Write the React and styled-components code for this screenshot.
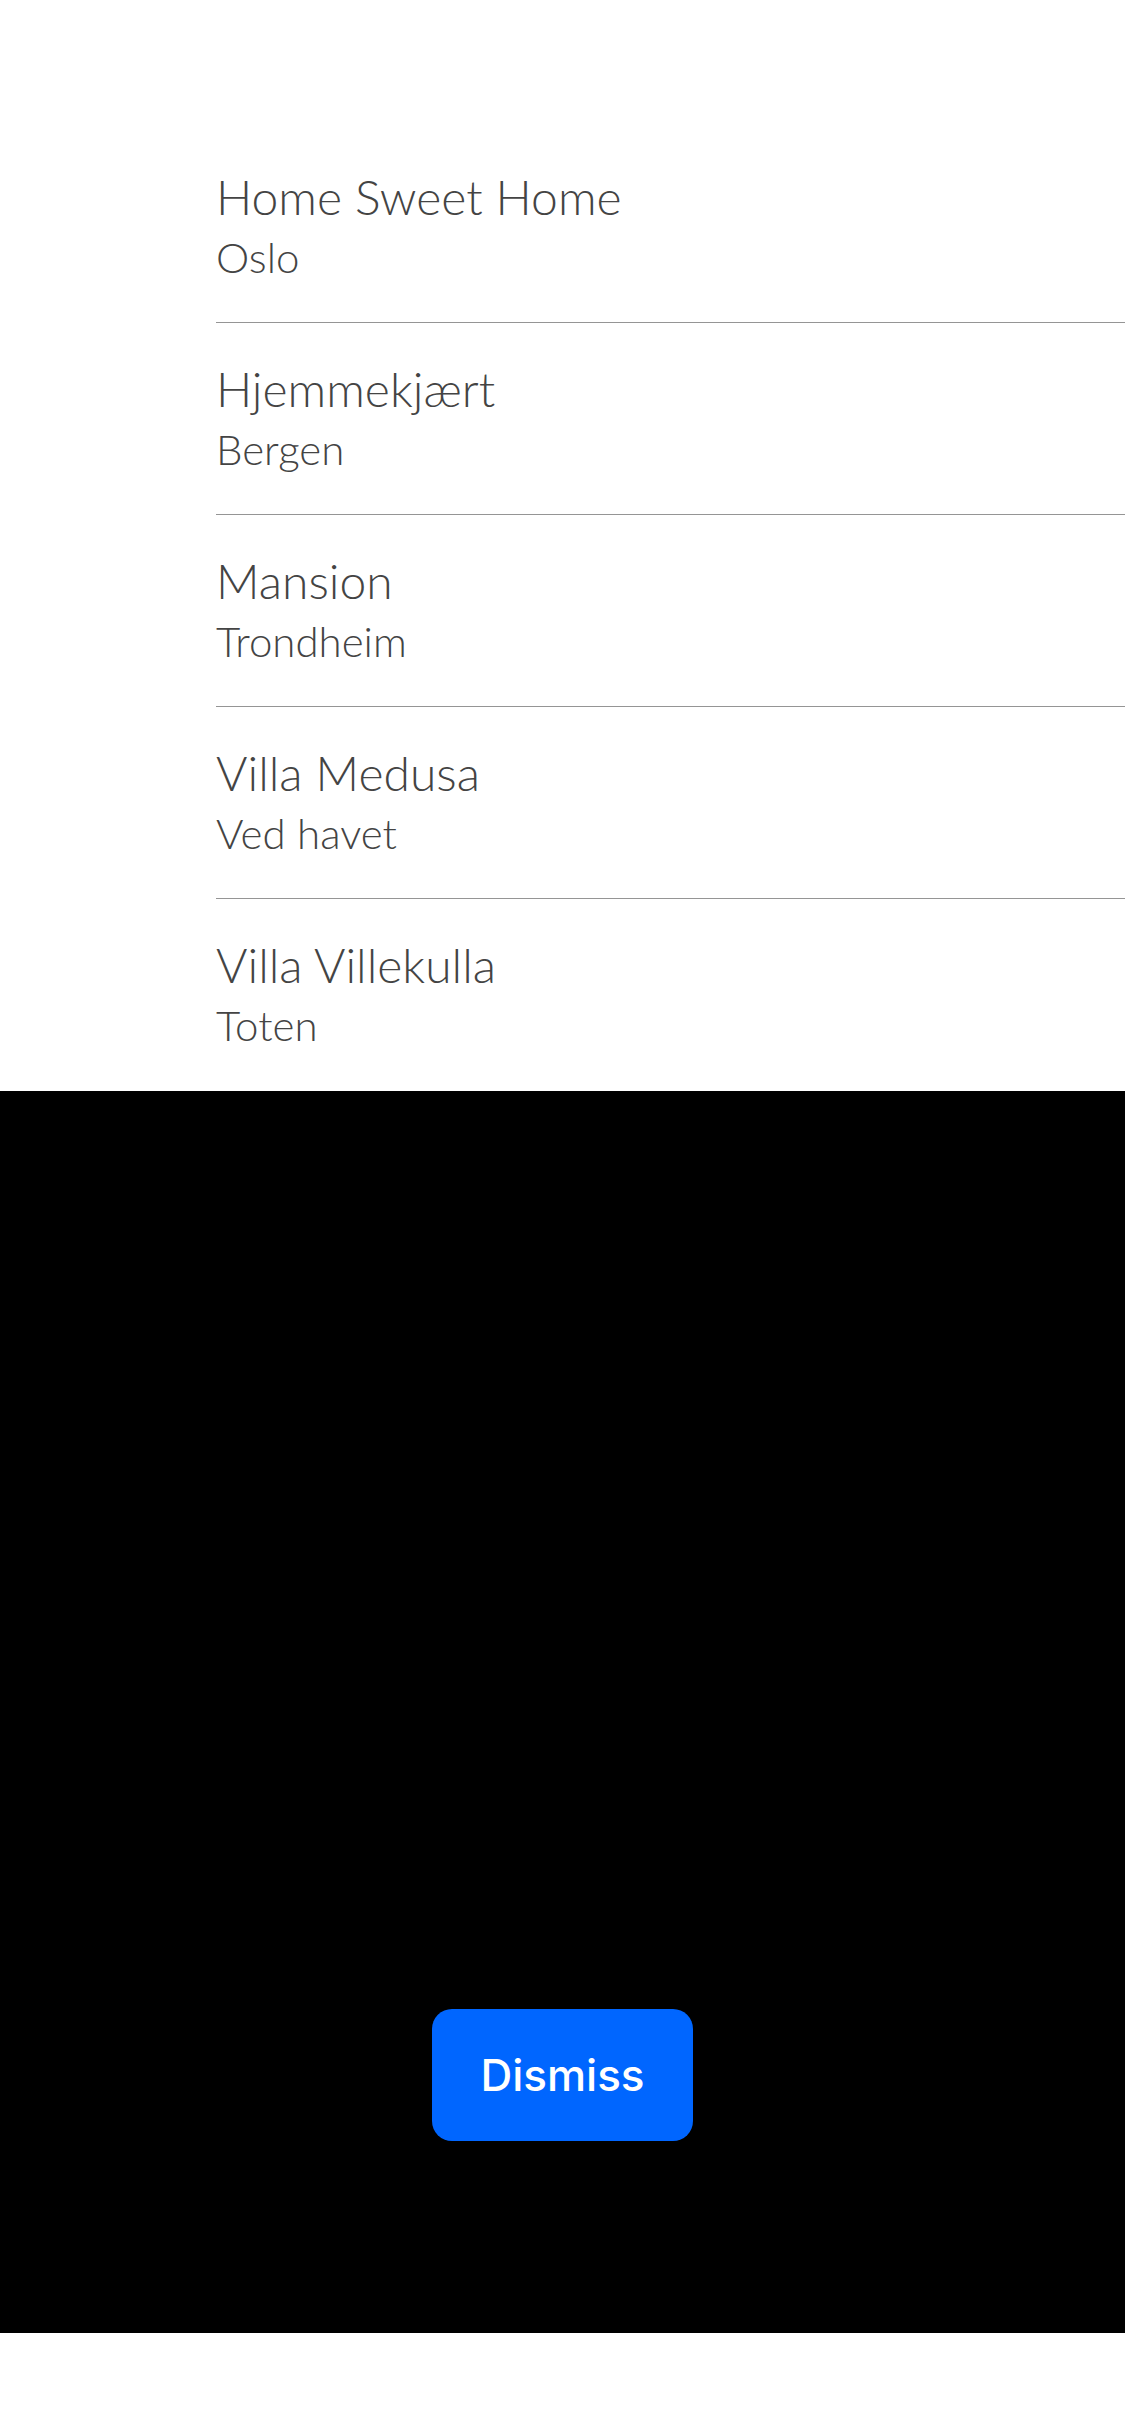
import React from 'react'
import styled, { createGlobalStyle } from 'styled-components'

const GlobalStyle = createGlobalStyle`
    html, body {
        margin: 0;
        padding: 0;
        background: #fff;
    }
    body {
        font-family: "Lato", "Liberation Sans", sans-serif;
    }
`

const Page = styled.div`
    width: 1125px;
    height: 2436px;
    display: flex;
    flex-direction: column;
    background: #fff;
    overflow: hidden;
`

const HouseList = styled.ul`
    list-style: none;
    margin: 0;
    padding: 131px 0 0 216px;
`

const HouseRow = styled.li`
    box-sizing: border-box;
    height: 192px;
    padding-top: 37px;
    border-bottom: ${props => (props.last ? 'none' : '1px solid #959595')};
`

const HouseName = styled.div`
    font-size: 48px;
    line-height: 58px;
    font-weight: 300;
    color: #444;
`

const HouseCity = styled.div`
    font-size: 42px;
    line-height: 62px;
    font-weight: 300;
    color: #444;
`

const Overlay = styled.div`
    height: 1242px;
    background: #000;
    display: flex;
    flex-direction: column;
    justify-content: flex-end;
    align-items: center;
    padding-bottom: 192px;
    box-sizing: border-box;
`

const DismissButton = styled.button`
    width: 261px;
    height: 132px;
    border: none;
    border-radius: 20px;
    background: #0066ff;
    color: #fff;
    font-family: "Inter", "Liberation Sans", sans-serif;
    font-size: 44px;
    font-weight: 500;
    cursor: pointer;
`

const houses = [
    { name: 'Home Sweet Home', city: 'Oslo' },
    { name: 'Hjemmekjært', city: 'Bergen' },
    { name: 'Mansion', city: 'Trondheim' },
    { name: 'Villa Medusa', city: 'Ved havet' },
    { name: 'Villa Villekulla', city: 'Toten' },
]

const App = () => {
    return (
        <Page>
            <GlobalStyle />
            <HouseList>
                {houses.map((house, i) => (
                    <HouseRow key={house.name} last={i === houses.length - 1}>
                        <HouseName>{house.name}</HouseName>
                        <HouseCity>{house.city}</HouseCity>
                    </HouseRow>
                ))}
            </HouseList>
            <Overlay>
                <DismissButton>Dismiss</DismissButton>
            </Overlay>
        </Page>
    )
}

export default App
